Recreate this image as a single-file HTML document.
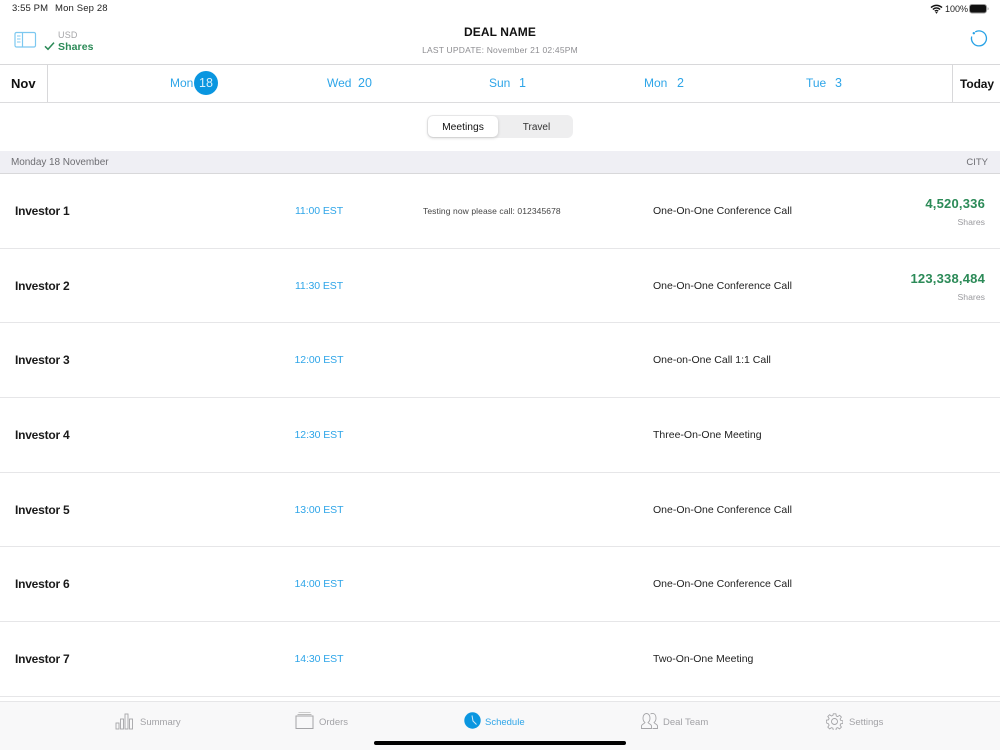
<!DOCTYPE html>
<html><head><meta charset="utf-8"><style>
*{margin:0;padding:0;box-sizing:border-box}
html,body{width:1000px;height:750px;overflow:hidden;background:#fff}
body{position:relative;font-family:"Liberation Sans",sans-serif;color:#000}
.t{position:absolute;white-space:nowrap;line-height:16px}
.l{position:absolute;left:0;width:1000px;height:1px;background:#e6e6e8}
.inv{left:15px;font-size:12px;font-weight:bold;letter-spacing:-.22px;color:#1a1a1a}
.tm{font-size:10.5px;color:#2ea5e8;letter-spacing:-.08px;text-align:center;width:80px;left:279px}
.ty{left:653px;font-size:10.5px;color:#222}
.d{font-size:12px;color:#2ea5e8}
.n{font-size:12.5px;color:#2ea5e8}
.tab{font-size:9.5px;color:#a2a2a6;top:715px}
.sh{right:15px;font-size:8.7px;color:#9a9a9e}
.q{right:15px;font-size:13px;font-weight:bold;color:#2b8a57;letter-spacing:.2px}
</style></head><body>
<div class="t" style="left:12px;top:1px;font-size:9.5px;color:#222;letter-spacing:.1px">3:55 PM</div>
<div class="t" style="left:55px;top:1px;font-size:9.5px;color:#222;letter-spacing:.15px">Mon Sep 28</div>
<svg style="position:absolute;left:930px;top:4px" width="13" height="10" viewBox="0 0 13 10"><path d="M1 3.6C4.3.6 8.700.6 12 3.600M2.900 5.500c2.200-2 5-2 7.200 0M4.800 7.200c1.100-.9 2.300-.9 3.400 0" fill="none" stroke="#111" stroke-width="1.5"/><path d="M6.500 9.800 5.300 8.400c.7-.5 1.700-.5 2.400 0z" fill="#111"/></svg>
<div class="t" style="left:945px;top:1px;font-size:9px;color:#222">100%</div>
<svg style="position:absolute;left:969px;top:4px" width="20" height="10" viewBox="0 0 20 10"><rect x=".5" y=".5" width="17" height="8.500" rx="2.500" fill="#111" stroke="#999"/><path d="M18.600 3.200c.7.200 1 .7 1 1.500s-.3 1.300-1 1.500z" fill="#999"/></svg>

<svg style="position:absolute;left:14px;top:31px" width="23" height="18" viewBox="0 0 23 18" fill="none" stroke="#7cc8f0" stroke-width="1.200"><rect x="1" y="1.500" width="20.500" height="14.500" rx="1.500"/><path d="M8.500 1.500V16"/><path d="M3 5h3.500M3 8h3.500M3 11h3.500" stroke-width="1"/></svg>
<div class="t" style="left:58px;top:27px;font-size:9px;color:#a5a5a8;letter-spacing:.2px">USD</div>
<svg style="position:absolute;left:44px;top:41px" width="11" height="10" viewBox="0 0 11 10"><path d="M1 5.300 4 8.300 10 1.600" fill="none" stroke="#2b8a57" stroke-width="1.500"/></svg>
<div class="t" style="left:58px;top:39px;font-size:10.5px;font-weight:bold;color:#2b8a57;letter-spacing:.1px">Shares</div>
<div class="t" style="left:0;width:1000px;text-align:center;top:24px;font-size:12px;font-weight:bold;color:#111;letter-spacing:.1px">DEAL NAME</div>
<div class="t" style="left:0;width:1000px;text-align:center;top:42px;font-size:8.5px;color:#8e8e92;letter-spacing:.2px">LAST UPDATE: November 21 02:45PM</div>
<svg style="position:absolute;left:970px;top:29px" width="18" height="18" viewBox="0 0 18 18" fill="none"><path d="M5.200 2.900A7.500 7.500 0 1 1 1.700 7.500" stroke="#28a2e6" stroke-width="1.300"/><circle cx="3.800" cy="4.200" r="1.200" fill="#28a2e6"/></svg>

<div class="l" style="top:63.500px;background:#d8d8da"></div>
<div class="l" style="top:102px;background:#dcdcde"></div>
<div style="position:absolute;left:47px;top:64px;width:1px;height:38px;background:#d8d8da"></div>
<div style="position:absolute;left:952px;top:64px;width:1px;height:38px;background:#d8d8da"></div>
<div class="t" style="left:11px;top:76px;font-size:13px;font-weight:bold;color:#111">Nov</div>
<div class="t" style="left:960px;top:76px;font-size:12px;font-weight:bold;color:#111;letter-spacing:-.1px">Today</div>
<div class="t d" style="left:170px;top:75px">Mon</div>
<div style="position:absolute;left:194px;top:71px;width:24px;height:24px;border-radius:50%;background:#0a96e0;color:#d8effb;font-size:12.5px;line-height:24px;text-align:center">18</div>
<div class="t d" style="left:327px;top:75px">Wed</div><div class="t n" style="left:358px;top:75px">20</div>
<div class="t d" style="left:489px;top:75px">Sun</div><div class="t n" style="left:519px;top:75px">1</div>
<div class="t d" style="left:644px;top:75px">Mon</div><div class="t n" style="left:677px;top:75px">2</div>
<div class="t d" style="left:806px;top:75px">Tue</div><div class="t n" style="left:835px;top:75px">3</div>

<div style="position:absolute;left:427px;top:115px;width:146px;height:23px;border-radius:6px;background:#eeeeef"></div>
<div style="position:absolute;left:428px;top:116px;width:70px;height:21px;border-radius:5px;background:#fff;box-shadow:0 1px 3px rgba(0,0,0,.18)"></div>
<div class="t" style="left:428px;width:70px;text-align:center;top:120px;font-size:10.3px;color:#111">Meetings</div>
<div class="t" style="left:500px;width:73px;text-align:center;top:120px;font-size:10px;color:#333">Travel</div>

<div style="position:absolute;left:0;top:151px;width:1000px;height:23px;background:#efeff4;border-bottom:1px solid #d8d8da"></div>
<div class="t" style="left:11px;top:155px;font-size:10px;color:#6d6d72;letter-spacing:-.05px">Monday 18 November</div>
<div class="t" style="right:12px;top:155px;font-size:9.5px;color:#6d6d72">CITY</div>

<div class="t inv" style="top:203px">Investor 1</div><div class="t tm" style="top:203px">11:00 EST</div>
<div class="t" style="left:423px;top:203px;font-size:8.5px;color:#444;letter-spacing:.09px">Testing now please call: 012345678</div>
<div class="t ty" style="top:203px">One-On-One Conference Call</div>
<div class="t q" style="top:196px">4,520,336</div>
<div class="t sh" style="top:214px">Shares</div>
<div class="l" style="top:248px"></div>

<div class="t inv" style="top:278px">Investor 2</div><div class="t tm" style="top:278px">11:30 EST</div>
<div class="t ty" style="top:278px">One-On-One Conference Call</div>
<div class="t q" style="top:271px">123,338,484</div>
<div class="t sh" style="top:289px">Shares</div>
<div class="l" style="top:322px"></div>

<div class="t inv" style="top:352px">Investor 3</div><div class="t tm" style="top:352px">12:00 EST</div>
<div class="t ty" style="top:352px">One-on-One Call 1:1 Call</div>
<div class="l" style="top:397px"></div>

<div class="t inv" style="top:427px">Investor 4</div><div class="t tm" style="top:427px">12:30 EST</div>
<div class="t ty" style="top:427px">Three-On-One Meeting</div>
<div class="l" style="top:472px"></div>

<div class="t inv" style="top:502px">Investor 5</div><div class="t tm" style="top:502px">13:00 EST</div>
<div class="t ty" style="top:502px">One-On-One Conference Call</div>
<div class="l" style="top:546px"></div>

<div class="t inv" style="top:576px">Investor 6</div><div class="t tm" style="top:576px">14:00 EST</div>
<div class="t ty" style="top:576px">One-On-One Conference Call</div>
<div class="l" style="top:621px"></div>

<div class="t inv" style="top:651px">Investor 7</div><div class="t tm" style="top:651px">14:30 EST</div>
<div class="t ty" style="top:651px">Two-On-One Meeting</div>
<div class="l" style="top:696px"></div>

<div style="position:absolute;left:0;top:701px;width:1000px;height:49px;background:#f8f8f9;border-top:1px solid #e6e6e8"></div>
<svg style="position:absolute;left:115px;top:712px" width="19" height="18" viewBox="0 0 19 18" fill="none" stroke="#a5a5a8" stroke-width=".9"><rect x="1" y="11" width="3" height="6"/><rect x="5.500" y="7" width="3" height="10"/><rect x="10" y="2" width="3" height="15"/><rect x="14.500" y="7" width="3" height="10"/></svg>
<div class="t tab" style="left:140px">Summary</div>
<svg style="position:absolute;left:295px;top:711px" width="20" height="19" viewBox="0 0 20 19" fill="none" stroke="#a5a5a8"><rect x="1" y="5" width="17" height="12.500"/><path d="M2.500 3.500h14" stroke="#bbb"/><path d="M3.500 1.500h12" stroke="#ccc"/></svg>
<div class="t tab" style="left:319px">Orders</div>
<svg style="position:absolute;left:464px;top:712px" width="17" height="17" viewBox="0 0 17 17"><circle cx="8.500" cy="8.500" r="8.200" fill="#0a96e0"/><path d="M8 3.500 9 9 12.500 12.500" fill="none" stroke="#cfe9f8" stroke-width="1"/></svg>
<div class="t tab" style="left:485px;color:#2ea5e8">Schedule</div>
<svg style="position:absolute;left:640px;top:712px" width="20" height="18" viewBox="0 0 20 18" fill="none" stroke="#a5a5a8" stroke-width=".9"><path d="M1.500 16.500v-2.500c0-1.500 3-2.300 3.500-3.500-1.500-1-2-2.500-2-4.500C3 3.500 4.500 1.500 6.500 1.500S10 3.500 10 6c0 2-.5 3.500-2 4.500.5 1.200 3.500 2 3.500 3.500v2.500z"/><path d="M10.500 2c.6-.4 1.200-.6 2-.6 2.200 0 3.500 2 3.500 4.600 0 2-.5 3.500-2 4.500.5 1.200 3.500 2 3.500 3.500v2.500h-5"/></svg>
<div class="t tab" style="left:663px">Deal Team</div>
<svg style="position:absolute;left:826px;top:713px" width="17" height="17" viewBox="0 0 17 17" fill="none" stroke="#a5a5a8" stroke-width=".9"><circle cx="8.500" cy="8.500" r="3"/><path d="M7.200 1h2.600l.4 2.200 1.400.6 1.900-1.300 1.800 1.800-1.300 1.900.6 1.400 2.200.4v2.600l-2.200.4-.6 1.400 1.300 1.900-1.800 1.800-1.900-1.300-1.400.6-.4 2.200H7.200l-.4-2.200-1.400-.6-1.900 1.300-1.800-1.800 1.300-1.900-.6-1.400L.2 10V7.400l2.200-.4.600-1.400-1.300-1.900 1.800-1.800 1.900 1.300 1.400-.6z" transform="translate(.1 -.2)"/></svg>
<div class="t tab" style="left:849px">Settings</div>
<div style="position:absolute;left:374px;top:741px;width:252px;height:4px;border-radius:2px;background:#000"></div>
</body></html>
